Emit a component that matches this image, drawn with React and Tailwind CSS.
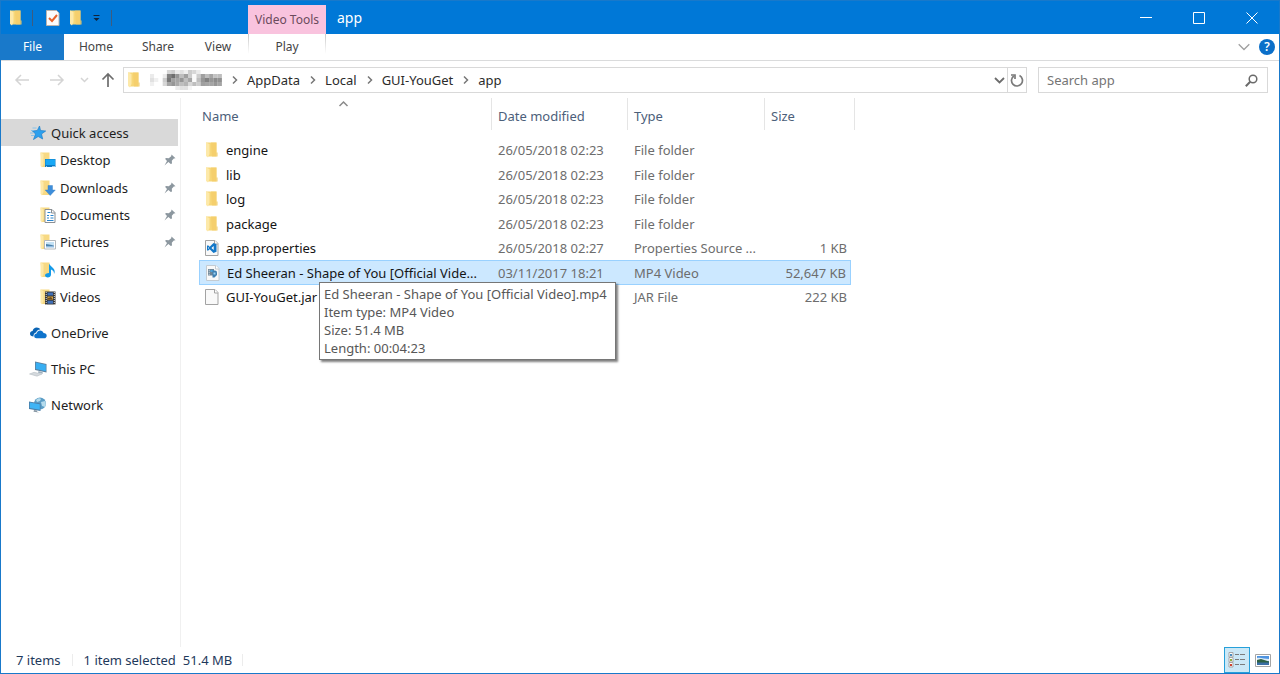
import React, { useState } from 'react';

const tabs = [
  { label: 'Home', className: 'w-16' },
  { label: 'Share', className: 'w-15' },
  { label: 'View', className: 'w-15' },
];

const crumbs = ['AppData', 'Local', 'GUI-YouGet', 'app'];

const quickAccess = [
  { label: 'Desktop', pinned: true },
  { label: 'Downloads', pinned: true },
  { label: 'Documents', pinned: true },
  { label: 'Pictures', pinned: true },
  { label: 'Music' },
  { label: 'Videos' },
];

const files = [
  { name: 'engine', icon: 'folder', date: '26/05/2018 02:23', type: 'File folder', size: '' },
  { name: 'lib', icon: 'folder', date: '26/05/2018 02:23', type: 'File folder', size: '' },
  { name: 'log', icon: 'folder', date: '26/05/2018 02:23', type: 'File folder', size: '' },
  { name: 'package', icon: 'folder', date: '26/05/2018 02:23', type: 'File folder', size: '' },
  { name: 'app.properties', icon: 'code', date: '26/05/2018 02:27', type: 'Properties Source ...', size: '1 KB' },
  {
    name: 'Ed Sheeran - Shape of You [Official Vide...',
    icon: 'video',
    date: '03/11/2017 18:21',
    type: 'MP4 Video',
    size: '52,647 KB',
    details: [
      'Ed Sheeran - Shape of You [Official Video].mp4',
      'Item type: MP4 Video',
      'Size: 51.4 MB',
      'Length: 00:04:23',
    ],
  },
  { name: 'GUI-YouGet.jar', icon: 'blank', date: '', type: 'JAR File', size: '222 KB' },
];

// Pixelated user name: one row of grey levels per line of blocks
const mosaic = [
  [255, 255, 255, 255, 215, 205, 235, 225, 240, 205, 215, 235, 255, 255, 255, 255, 255],
  [235, 255, 255, 235, 130, 110, 150, 190, 160, 205, 250, 205, 160, 190, 165, 195, 190],
  [225, 240, 255, 205, 120, 160, 165, 150, 190, 165, 250, 190, 150, 130, 150, 140, 145],
  [240, 255, 255, 215, 165, 150, 170, 190, 180, 215, 190, 205, 160, 165, 165, 150, 165],
  [255, 255, 255, 255, 255, 255, 235, 225, 225, 245, 255, 255, 255, 255, 255, 255, 255],
];

function FolderIcon() {
  return (
    <svg width="16" height="16" viewBox="0 0 16 16" className="shrink-0">
      <path d="M2 .5h10.500v14H4z" fill="#f7d778" />
      <path d="M7 .5h5.500v14H8z" fill="#f3cc68" opacity=".7" />
      <path d="M2 .5l3.500 1.500V12l-1.500 3.500L2 14z" fill="#fde9a9" />
      <path d="M12.500 10.500h1v4h-1z" fill="#efc966" />
    </svg>
  );
}

function FileIcon({ kind }) {
  if (kind === 'folder') {
    return <FolderIcon />;
  }
  const edge = kind === 'video' ? '#c3cbd2' : '#a3a3a3';

  return (
    <svg width="16" height="16" viewBox="0 0 16 16" className="shrink-0">
      <path d="M1.500.5h9.500l3 3v12H1.500z" fill="#f9f9f9" stroke={edge} />
      <path d="M10.500.5v3.500H14" fill="#fff" stroke={edge} />
      {kind === 'code' && (
        <path
          fillRule="evenodd"
          fill="#1478c8"
          d="M9.500 3L12.500 4.200v7.600L9.500 13 5.700 9.300 4 10.700 3 10.200V5.800L4 5.300l1.700 1.400zM9.700 6L7.400 8l2.300 2zM4 7v2l1-1z"
        />
      )}
      {kind === 'video' && (
        <>
          <path d="M3 4h6v6.500H3z" fill="#6f8596" />
          <path d="M3.700 4.700h1v1h-1zM3.700 6.700h1v1h-1zM3.700 8.700h1v1h-1z" fill="#dfeaf2" />
          <path d="M5.500 5h3v2h-3z" fill="#4ba3dc" />
          <path d="M7.500 5.500h2.500a2 2 0 0 1 2 2V10l-2.500 2.500h-2z" fill="#3f7fb0" />
          <path d="M8.500 7.500h2v2h-2z" fill="#9cd3f2" />
        </>
      )}
    </svg>
  );
}

function PlaceIcon({ name }) {
  return (
    <svg width="16" height="16" viewBox="0 0 16 16" className="shrink-0">
      <path d="M.5.5H9.500V15H2z" fill="#f7d983" />
      <path d="M.5.5l3 1.500v10L2 15.500.5 14z" fill="#fde9a9" />
      {name === 'Desktop' && (
        <>
          <path d="M5 7h10.500v8H5z" fill="#0e7cc4" />
          <path d="M5.500 7.500h9.500v5.500H5.500z" fill="#18a8f5" />
          <path d="M6 14h1v.8H6zM12 14h3v.8h-3z" fill="#c6e8fb" />
        </>
      )}
      {name === 'Downloads' && (
        <path d="M8 5.500h4.500v4.500h2.800L10.200 15.500 5.200 10H8z" fill="#3d8edb" stroke="#2f78c0" strokeWidth=".4" />
      )}
      {name === 'Documents' && (
        <>
          <path d="M5 2.500h7l3 3v10H5z" fill="#fff" stroke="#8a8f94" />
          <path d="M11.500 2.500v3.500H15" fill="none" stroke="#8a8f94" />
          <path d="M7 8.500h2M10.500 8.500h3M7 11h2M10.500 11h3M7 13.500h6.500M7.500 5.500h3" stroke="#2a86d0" />
        </>
      )}
      {name === 'Pictures' && (
        <>
          <path d="M4.500 6.500H15.500v8.500H4.500z" fill="#fff" stroke="#b4b8bc" />
          <path d="M6 8h8v3H6z" fill="#c4e2f6" />
          <path d="M6 10l3 .5 5 1V12.500H6z" fill="#4c82ad" />
          <path d="M6 12h8v1.500H6z" fill="#8fbbe0" />
        </>
      )}
      {name === 'Music' && (
        <path
          d="M9 1.500c1 2 2 2.800 4 4.500 2 1.800 2.200 4 1 6 .1-2.500-1-3.800-3-4.500v5c0 1.800-1.500 3-3.200 3S5 14.500 5 13.300 6.500 11 9 11z"
          fill="#149ae8"
        />
      )}
      {name === 'Videos' && (
        <>
          <path d="M5 2.500h10.500v13H5z" fill="#353535" />
          <path d="M7.500 3.500h5.500v3H7.500z" fill="#3f6fb8" />
          <path d="M7.500 7.500h5.500v3.200H7.500z" fill="#d7a53f" />
          <path d="M7.500 11.700h5.500v3H7.500z" fill="#3f6fb8" />
          <path d="M6.200 3v12.500M14.300 3v12.500" stroke="#e0e0e0" strokeDasharray="1 1" />
          <path d="M8 9l3-1 2 2.500H8z" fill="#6a4a22" />
        </>
      )}
    </svg>
  );
}

function StarIcon() {
  return (
    <svg width="17" height="16" viewBox="0 0 17 16" className="shrink-0">
      <path
        d="M9.500 1l1 4.500 5.200.5-4.200 3 1.200 5-4.500-2.500-4.700 3 2-5.500L2.500 6l4.800-.5z"
        fill="#2ba0ee"
        stroke="#1c80cc"
        strokeWidth=".7"
      />
      <path d="M2.500 3h4M1 5.500h3M0 8h3.500M1 10.500h3" stroke="#74bdec" strokeWidth=".8" />
    </svg>
  );
}

function CloudIcon() {
  return (
    <svg width="17" height="16" viewBox="0 0 17 16" className="shrink-0">
      <path
        d="M3.500 11.500C1.500 11.500 0 10.500 0 8.800 0 7.200 1.200 6.200 2.600 6.100 3 4 4.600 2.600 6.800 2.600c1.500 0 2.700.7 3.500 1.900-2.300-.1-3.800 1.300-4.200 3.100C4.200 8 3.200 9.800 3.500 11.500z"
        fill="#0a64b4"
      />
      <path
        d="M6.500 13.300c-1.300 0-2.300-1-2.300-2.300 0-1.400 1-2.300 2.400-2.400.2-1.900 1.600-3.200 3.500-3.200 1.700 0 3 1 3.400 2.600 1.900 0 3.200 1 3.200 2.700 0 1.500-1 2.600-2.500 2.600z"
        fill="#0f74cc"
      />
    </svg>
  );
}

function ComputerIcon() {
  return (
    <svg width="18" height="16" viewBox="0 0 18 16" className="shrink-0">
      <path d="M6 .5l11.500 2.500v8.500L6 9z" fill="#5d7f9c" />
      <path d="M6.800 1.500l10 2.200v6.500L6.800 8z" fill="#38aef2" />
      <path d="M9.500 10l4 .9.500 1.800-5-1z" fill="#9fb1bf" />
      <path d="M.5 13l4.500-1.700 8 1.700-5 2.200z" fill="#d4d9dd" stroke="#aeb6bd" strokeWidth=".5" />
    </svg>
  );
}

function NetworkIcon() {
  return (
    <svg width="18" height="16" viewBox="0 0 18 16" className="shrink-0">
      <circle cx="11" cy="6.500" r="6" fill="#5b9dc6" />
      <path d="M7 3c2-2 4-2 5-1l-1 2-3 1zM12 5l4-1c1 2 1 4 0 6l-3-1z" fill="#b5dbec" />
      <path d="M0 4.500L11.500 6.500V14L0 12z" fill="#4a7ea8" />
      <path d="M.8 5.500l10 1.800v5.500L.8 11z" fill="#3fb4f5" />
      <path d="M5 13l3 .6v1l2 .9-5.500-.8z" fill="#8b9aa6" />
    </svg>
  );
}

function PinIcon() {
  return (
    <svg width="12" height="12" viewBox="0 0 12 12" className="ml-auto shrink-0">
      <path d="M7.500.5l4 3.800-1.700.3-2 2.200.2 2.700-1.200.5-2.400-2L.5 11.500 3 7 1.200 5l.6-1 2.900.2 2.500-2z" fill="#8c979f" />
    </svg>
  );
}

function Chevron({ className, d = 'M1 1l3.500 3.500L8 1' }) {
  return (
    <svg width="11" height="10" viewBox="-1 -2 11 10" fill="none" stroke="currentColor" className={className}>
      <path d={d} strokeWidth="1.500" />
    </svg>
  );
}

function TitleBar() {
  return (
    <div className="flex h-[33px] items-stretch bg-[#0078d7] text-white">
      <div className="flex w-[247px] items-center pl-[7px]">
        <FolderIcon />
        <span className="mx-2 h-4 w-px bg-[#3c5c80]" />
        <button aria-label="Properties" className="ml-1">
          <svg width="16" height="16" viewBox="0 0 16 16">
            <path d="M1.500.5h10l2.500 2.500v12.500H1.500z" fill="#fbfbfb" stroke="#b9b3ae" />
            <path d="M4 8l3 3 5-6" fill="none" stroke="#e8622a" strokeWidth="2" />
          </svg>
        </button>
        <button aria-label="New folder" className="ml-[7px]">
          <FolderIcon />
        </button>
        <button aria-label="Customize Quick Access Toolbar" className="ml-2">
          <svg width="9" height="8" viewBox="0 0 9 8">
            <path d="M1.500 1.500h6" stroke="#10243c" />
            <path d="M1.500 4h6L4.500 7z" fill="#10243c" />
          </svg>
        </button>
        <span className="ml-2.5 h-4 w-px bg-[#3c5c80]" />
      </div>
      <div className="mt-1 flex w-[78px] items-center justify-center bg-[#f9c3de] text-xs text-[#6b4a5c]">
        Video Tools
      </div>
      <h1 className="self-center pl-[11px] text-sm">app</h1>
      <div className="ml-auto flex pr-px">
        <button aria-label="Minimize" className="flex w-[53px] items-center justify-center">
          <svg width="12" height="12" viewBox="0 0 12 12" stroke="#fff">
            <path d="M0 5.500h12" />
          </svg>
        </button>
        <button aria-label="Maximize" className="flex w-[53px] items-center justify-center">
          <svg width="12" height="12" viewBox="0 0 12 12" stroke="#fff" fill="none">
            <path d="M.5.5h11v11H.5z" />
          </svg>
        </button>
        <button aria-label="Close" className="flex w-[53px] items-center justify-center">
          <svg width="12" height="12" viewBox="0 0 12 12" stroke="#fff" fill="none">
            <path d="M.5.5l11 11M11.500.5l-11 11" />
          </svg>
        </button>
      </div>
    </div>
  );
}

function Ribbon() {
  return (
    <div className="flex h-[27px] border-b border-[#dadbdc] text-xs text-[#444]">
      <button className="w-[63px] bg-[#1979ca] text-white">File</button>
      {tabs.map((tab) => (
        <button key={tab.label} className={tab.className}>
          {tab.label}
        </button>
      ))}
      <div className="h-5 w-px bg-linear-to-b from-[#c8c8c8] to-white" />
      <button className="w-[76px]">Play</button>
      <div className="h-5 w-px bg-linear-to-b from-[#c8c8c8] to-white" />
      <div className="ml-auto flex items-center gap-[9px] pr-1">
        <button aria-label="Minimize the Ribbon" className="text-[#a0a0a0]">
          <svg width="12" height="8" viewBox="0 0 12 8" fill="none" stroke="currentColor" strokeWidth="1.300">
            <path d="M.7 1.200L6 6.500l5.300-5.300" />
          </svg>
        </button>
        <button className="size-4 rounded-full bg-[#0b6fc9] text-xs leading-4 font-semibold text-white">?</button>
      </div>
    </div>
  );
}

function AddressRow() {
  const [query, setQuery] = useState('');

  return (
    <div className="flex items-center pt-1.5 pr-[11px] pb-[5px] pl-[13px]">
      <button aria-label="Back" className="text-[#d4d4d4]">
        <svg width="16" height="14" viewBox="0 0 16 14" fill="none" stroke="currentColor" strokeWidth="1.500">
          <path d="M15 7H2M7 2L2 7l5 5" />
        </svg>
      </button>
      <button aria-label="Forward" className="ml-[19px] text-[#d4d4d4]">
        <svg width="16" height="14" viewBox="0 0 16 14" fill="none" stroke="currentColor" strokeWidth="1.500">
          <path d="M1 7h13M9 2l5 5-5 5" />
        </svg>
      </button>
      <button aria-label="Recent locations" className="ml-[14px] text-[#d4d4d4]">
        <Chevron />
      </button>
      <button aria-label="Up" className="ml-[11px] text-[#6d6d6d]">
        <svg width="14" height="16" viewBox="0 0 14 16" fill="none" stroke="currentColor" strokeWidth="1.700">
          <path d="M7 15V2M1.500 7.500L7 2l5.500 5.500" />
        </svg>
      </button>

      <div className="ml-2 flex h-[26px] flex-1 items-stretch border border-[#d9d9d9]">
        <nav className="flex flex-1 items-center pl-0.5 text-[#2b2b2b]">
          <FolderIcon />
          <svg width="72" height="20" viewBox="0 0 75 20" preserveAspectRatio="none" className="ml-2" aria-label="User folder">
            {mosaic.map((row, y) =>
              row.map((v, x) => (
                <rect key={`${x}-${y}`} x={x * 4.400} y={y * 4} width="4.500" height="4" fill={`rgb(${v},${v},${v})`} />
              ))
            )}
          </svg>
          {crumbs.map((crumb) => (
            <React.Fragment key={crumb}>
              <Chevron d="M3 -.5l3.500 3.500L3 6.500" className="mx-[7px] text-[#777]" />
              <button>{crumb}</button>
            </React.Fragment>
          ))}
        </nav>
        <button aria-label="Previous locations" className="pr-px text-[#6d6d6d]">
          <svg width="13" height="9" viewBox="0 0 13 9" fill="none" stroke="currentColor" strokeWidth="1.800">
            <path d="M2 2l4.500 4.500L11 2" />
          </svg>
        </button>
        <button
          aria-label="Refresh"
          className="flex w-[19px] items-center justify-center border-l border-[#d9d9d9] text-[#7a7a7a]"
        >
          <svg width="14" height="15" viewBox="0 0 14 15" fill="none" stroke="currentColor" strokeWidth="1.700">
            <path d="M9.500 2.600A5.500 5.500 0 1 1 3.800 3" />
            <path d="M1 2h4v4" />
          </svg>
        </button>
      </div>

      <div className="ml-[11px] flex h-[26px] w-[230px] items-center border border-[#d9d9d9] pr-[9px] pl-2">
        <input
          type="text"
          aria-label="Search app"
          placeholder="Search app"
          value={query}
          onChange={(e) => setQuery(e.target.value)}
          className="min-w-0 flex-1 outline-none placeholder:text-[#757575]"
        />
        <svg width="13" height="13" viewBox="0 0 13 13" fill="none" stroke="#6a6a6a">
          <circle cx="8" cy="5" r="3.800" strokeWidth="1.500" />
          <path d="M5.200 7.800L.8 12.200" strokeWidth="2" />
        </svg>
      </div>
    </div>
  );
}

function Sidebar() {
  return (
    <aside className="w-[180px] shrink-0 border-r border-[#f0f0f0] pt-[21px] text-[#1e1e1e]">
      <a href="#quick" className="mr-0.5 flex h-[27px] items-center gap-1 bg-[#d9d9d9] pl-[29px]">
        <StarIcon />
        Quick access
      </a>
      <ul>
        {quickAccess.map((item) => (
          <li key={item.label} className="h-[27px] nth-[3n+1]:h-7">
            <a href={`#${item.label}`} className="flex h-full items-center gap-1 pr-1 pl-[39px]">
              <PlaceIcon name={item.label} />
              {item.label}
              {item.pinned && <PinIcon />}
            </a>
          </li>
        ))}
      </ul>
      <a href="#onedrive" className="mt-[9px] flex h-[27px] items-center gap-1 pl-[29px]">
        <CloudIcon />
        OneDrive
      </a>
      <a href="#pc" className="mt-[9px] flex h-[27px] items-center gap-1 pl-7">
        <ComputerIcon />
        This PC
      </a>
      <a href="#network" className="mt-[9px] flex h-[27px] items-center gap-1 pl-7">
        <NetworkIcon />
        Network
      </a>
    </aside>
  );
}

function FileRow({ file, selected, onSelect }) {
  const cell = selected ? 'border-y border-[#99d1ff] bg-[#cce8ff]' : '';

  return (
    <tr onClick={onSelect} className="h-6 text-[#6d6d6d] even:h-[25px]">
      <td className={`relative p-0 ${cell} ${selected ? 'border-l' : ''}`}>
        <div className="flex items-center gap-1.5 pl-[5px] text-[#151515]">
          <FileIcon kind={file.icon} />
          {file.name}
        </div>
        {file.details && (
          <div
            role="tooltip"
            className="absolute top-[21px] left-[119px] z-10 border border-[#767676] bg-white py-0.5 pr-2 pl-1 leading-[18px] text-[#575757] shadow-[2px_2px_2px_rgba(0,0,0,0.5)]"
          >
            {file.details.map((line) => (
              <p key={line}>{line}</p>
            ))}
          </div>
        )}
      </td>
      <td className={`p-0 pl-1.5 ${cell}`}>{file.date}</td>
      <td className={`p-0 pl-1.5 ${cell}`}>{file.type}</td>
      <td className={`p-0 pr-1 text-right ${cell} ${selected ? 'border-r' : ''}`}>{file.size}</td>
    </tr>
  );
}

function FileList() {
  const [selected, setSelected] = useState(5);

  return (
    <main className="flex-1 pl-[18px]">
      <table className="w-[656px] table-fixed border-separate border-spacing-0 text-left whitespace-nowrap">
        <colgroup>
          <col className="w-[293px]" />
          <col className="w-[136px]" />
          <col className="w-[137px]" />
          <col className="w-[86px]" />
          <col className="w-1" />
        </colgroup>
        <thead className="text-[#4c607a]">
          <tr className="h-8">
            <th className="relative border-r border-[#e5e5e5] p-0 pt-1 pl-[3px] font-normal">
              <Chevron d="M.5 5l4-4 4 4" className="absolute top-px left-[139px] text-[#8a8a8a]" />
              Name
            </th>
            <th className="border-r border-[#e5e5e5] p-0 pt-1 pl-1.5 font-normal">Date modified</th>
            <th className="border-r border-[#e5e5e5] p-0 pt-1 pl-1.5 font-normal">Type</th>
            <th colSpan={2} className="border-r border-[#e5e5e5] p-0 pt-1 pl-1.5 font-normal">
              Size
            </th>
          </tr>
        </thead>
        <tbody className="before:block before:h-2">
          {files.map((file, i) => (
            <FileRow key={file.name} file={file} selected={i === selected} onSelect={() => setSelected(i)} />
          ))}
        </tbody>
      </table>
    </main>
  );
}

function StatusBar() {
  return (
    <footer className="flex h-[26px] items-center pl-[15px] text-[#1e395b]">
      <span>7 items</span>
      <span className="mx-[11px] h-3 w-px bg-[#ececec]" />
      <span>1 item selected</span>
      <span className="ml-[7px]">51.4 MB</span>
      <span className="ml-2.5 h-3 w-px bg-[#ececec]" />
      <div className="ml-auto flex self-stretch pr-1">
        <button
          aria-label="Details view"
          className="flex w-[26px] items-center justify-center border border-[#26a0da] bg-[#cbe8f6]"
        >
          <svg width="18" height="16" viewBox="0 0 18 16">
            <path d="M1 .5h4v4.500H1zM1 5.500h4v4.500H1zM1 10.500h4v4.500H1z" fill="#fff" stroke="#a5a5a5" />
            <path d="M2 2h2v2H2z" fill="#4a8fc0" />
            <path d="M2 7h2v2H2z" fill="#8fae3a" />
            <path d="M2 12h2v2H2z" fill="#d0432f" />
            <path d="M7 2.500h4M12 2.500h5M7 7.500h4M12 7.500h5M7 12.500h4M12 12.500h5" stroke="#7b7b7b" />
          </svg>
        </button>
        <button aria-label="Large icons view" className="flex w-[25px] items-center justify-center">
          <svg width="16" height="13" viewBox="0 0 16 13">
            <path d="M.5.5h15v12H.5z" fill="#fff" stroke="#a5a5a5" />
            <path d="M2 2h12v9H2z" fill="#4f94e0" />
            <path d="M2 4c3-1 8 1 12 1v2H2z" fill="#dbeaf8" />
            <path d="M2 6l4-1 8 2.500V9H2z" fill="#2d6043" />
            <path d="M2 8.500h12V11H2z" fill="#3a6ea5" />
          </svg>
        </button>
      </div>
    </footer>
  );
}

export default function App() {
  return (
    <div className="flex h-screen flex-col border border-[#1979ca] bg-white font-['Noto_Sans',sans-serif] text-[13px] leading-5">
      <TitleBar />
      <Ribbon />
      <AddressRow />
      <div className="flex flex-1">
        <Sidebar />
        <FileList />
      </div>
      <StatusBar />
    </div>
  );
}
